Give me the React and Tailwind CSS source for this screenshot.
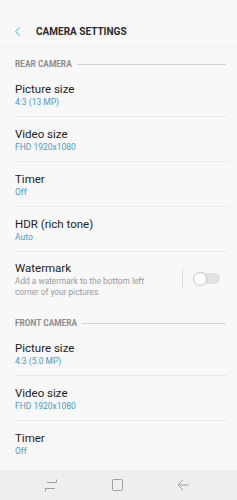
import { ChevronLeft } from "lucide-react";

const rear = [
  { title: "Picture size", value: "4:3 (13 MP)" },
  { title: "Video size", value: "FHD 1920x1080" },
  { title: "Timer", value: "Off" },
  { title: "HDR (rich tone)", value: "Auto" },
];

const front = [
  { title: "Picture size", value: "4:3 (5.0 MP)" },
  { title: "Video size", value: "FHD 1920x1080" },
  { title: "Timer", value: "Off" },
];

const Row = ({ title, value, last }) => (
  <div className={`ml-[15px] mr-[9px] h-[45px] flex flex-col justify-center ${last ? "" : "border-b border-[#ebebeb]"}`}>
    <p className="text-[11.5px] leading-[16px] text-[#222]">{title}</p>
    <p className="text-[8.5px] leading-[11px] text-[#4b9ac0]">{value}</p>
  </div>
);

const Section = ({ label, className = "" }) => (
  <div className={`flex items-center gap-[5px] pl-[15px] pr-[11px] h-[16px] ${className}`}>
    <span className="text-[8.3px] font-bold text-[#8d8d8d] whitespace-nowrap">{label}</span>
    <div className="flex-1 h-px bg-[#d2d2d2]" />
  </div>
);

const App = () => {
  return (
    <div className="w-[237px] h-[500px] bg-[#f8f8f8] flex flex-col overflow-hidden" style={{ fontFamily: "Roboto, sans-serif" }}>
      {/* Header */}
      <div className="h-[47px] pt-[17px] flex items-center border-b border-[#eeeeee]">
        <ChevronLeft size={15} strokeWidth={1.6} className="ml-[10px] text-[#5b9fc4]" />
        <h1 className="ml-[11px] text-[10px] font-bold text-[#2a2a2a]">CAMERA SETTINGS</h1>
      </div>

      <main className="flex-1">
        <Section label="REAR CAMERA" className="mt-[9px]" />
        {rear.map((item) => (
          <Row key={item.title} {...item} />
        ))}

        {/* Watermark */}
        <div className="ml-[15px] mr-[9px] h-[55px] pt-[8px] flex items-start">
          <div className="w-[155px]">
            <p className="text-[11.5px] leading-[16px] text-[#222]">Watermark</p>
            <p className="text-[8.3px] leading-[10.5px] text-[#9a9a9a]">
              Add a watermark to the bottom left
              <br />
              corner of your pictures.
            </p>
          </div>
          <div className="ml-[12px] mt-[8px] w-px h-[20px] bg-[#dcdcdc]" />
          <div className="relative ml-[11px] mt-[13px] w-[26px] h-[11px] rounded-full bg-[#e2e2e2]">
            <div className="absolute left-[-1px] top-[-1.5px] w-[14px] h-[14px] rounded-full bg-white border border-[#c6c6c6]" />
          </div>
        </div>

        <Section label="FRONT CAMERA" className="mt-[8px]" />
        {front.map((item, i) => (
          <Row key={item.title} {...item} last={i === front.length - 1} />
        ))}
      </main>

      {/* Nav bar */}
      <nav className="h-[30px] bg-[#eeeeee] flex items-center justify-between pl-[45px] pr-[48px]">
        <svg width="12" height="13" viewBox="0 0 12 13" fill="none" stroke="#a0a0a0" strokeWidth="1">
          <path d="M2 3.5h9.5V0.5" />
          <path d="M10 9.5H0.5v3" />
        </svg>
        <svg width="11" height="12" viewBox="0 0 11 12" fill="none" stroke="#a0a0a0" strokeWidth="1">
          <rect x="0.5" y="0.5" width="10" height="11" rx="1" />
        </svg>
        <svg width="12" height="12" viewBox="0 0 12 12" fill="none" stroke="#a0a0a0" strokeWidth="1">
          <path d="M11.5 6H1M6 1L1 6l5 5" />
        </svg>
      </nav>
    </div>
  );
};

export default App;
